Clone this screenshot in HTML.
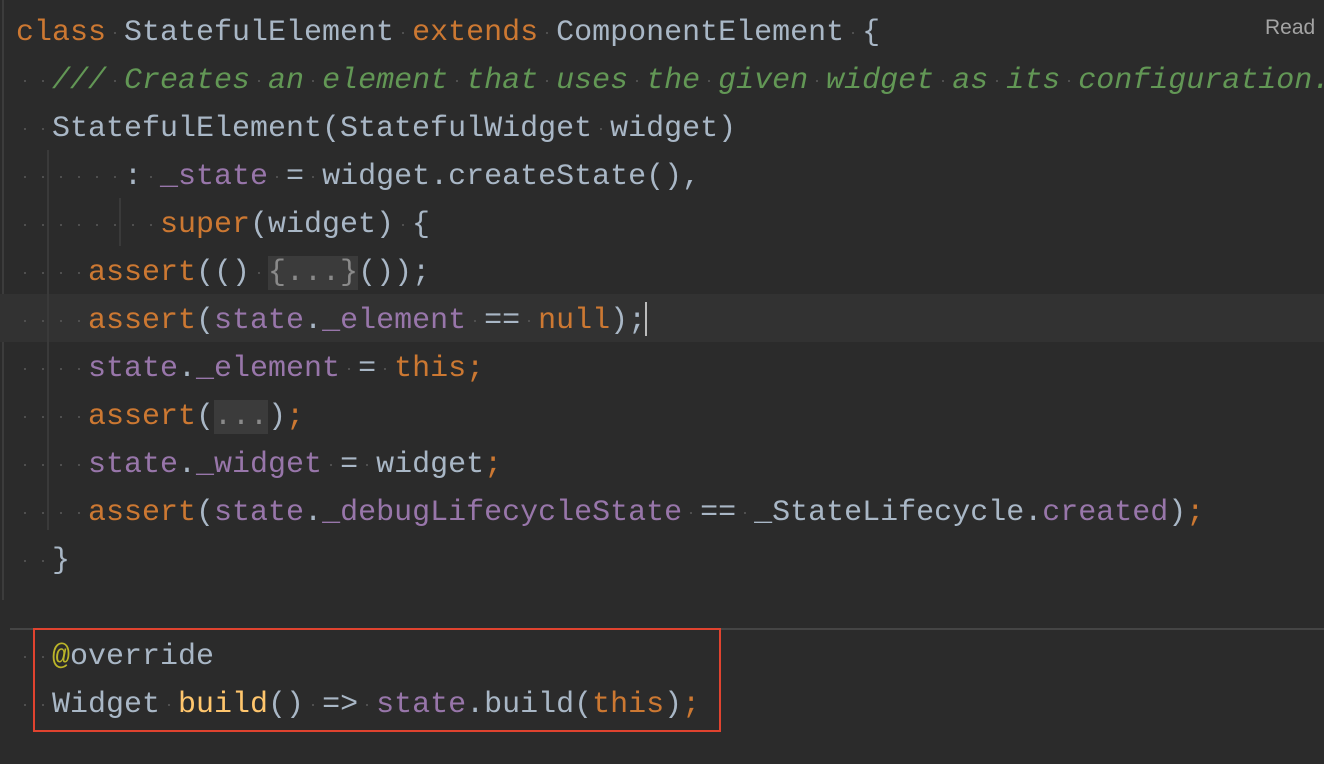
<!DOCTYPE html>
<html><head><meta charset="utf-8"><style>
html,body{margin:0;padding:0;background:#2b2b2b;width:1324px;height:764px;overflow:hidden;position:relative}
.code{position:absolute;left:16px;top:9px;font-family:"Liberation Mono",monospace;font-size:30px;line-height:48px;color:#a9b7c6;white-space:nowrap}
.l{height:48px;position:relative;z-index:2}
.k{color:#cc7832}.c{color:#629755;font-style:italic}.p{color:#9876aa}.y{color:#ffc66d}.a{color:#bbb529}
.f{background:#3b3b3b;color:#8a8a8a}
i{display:inline-block;width:18px;height:48px;vertical-align:top;position:relative}
i::after{content:"";position:absolute;left:8px;top:23px;width:2px;height:2px;background:#4f4f4f}
.cur{position:absolute;left:0;top:294px;width:1324px;height:48px;background:#323232;z-index:1}
.box{position:absolute;left:33px;top:628px;width:684px;height:100px;border:2px solid #e0432f;z-index:3}
.sep{position:absolute;left:10px;top:628px;width:1314px;height:2px;background:#454545;z-index:1}
.g{position:absolute;width:2px;background:#3a3a3a;z-index:2}
.read{position:absolute;left:1265px;top:16px;font-family:"Liberation Sans",sans-serif;font-size:21px;color:#a4a4a4;z-index:4}
.caret{position:absolute;left:645px;top:302px;width:2px;height:34px;background:#bbbbbb;z-index:3}
.gut{position:absolute;left:2px;top:0;width:2px;height:600px;background:#3c3c3c}
</style></head><body>
<div class="gut"></div>
<div class="cur"></div>
<div class="sep"></div>
<div class="g" style="left:47px;top:150px;height:380px"></div>
<div class="g" style="left:119px;top:198px;height:48px"></div>
<div class="read">Read</div>
<div class="code"><div class="l"><span class="k">class</span><i></i>StatefulElement<i></i><span class="k">extends</span><i></i>ComponentElement<i></i>{</div><div class="l"><i></i><i></i><span class="c">///<i></i>Creates<i></i>an<i></i>element<i></i>that<i></i>uses<i></i>the<i></i>given<i></i>widget<i></i>as<i></i>its<i></i>configuration.</span></div><div class="l"><i></i><i></i>StatefulElement(StatefulWidget<i></i>widget)</div><div class="l"><i></i><i></i><i></i><i></i><i></i><i></i>:<i></i><span class="p">_state</span><i></i>=<i></i>widget.createState(),</div><div class="l"><i></i><i></i><i></i><i></i><i></i><i></i><i></i><i></i><span class="k">super</span>(widget)<i></i>{</div><div class="l"><i></i><i></i><i></i><i></i><span class="k">assert</span>(()<i></i><span class="f">{...}</span>());</div><div class="l"><i></i><i></i><i></i><i></i><span class="k">assert</span>(<span class="p">state</span>.<span class="p">_element</span><i></i>==<i></i><span class="k">null</span>);</div><div class="l"><i></i><i></i><i></i><i></i><span class="p">state</span>.<span class="p">_element</span><i></i>=<i></i><span class="k">this;</span></div><div class="l"><i></i><i></i><i></i><i></i><span class="k">assert</span>(<span class="f">...</span>)<span class="k">;</span></div><div class="l"><i></i><i></i><i></i><i></i><span class="p">state</span>.<span class="p">_widget</span><i></i>=<i></i>widget<span class="k">;</span></div><div class="l"><i></i><i></i><i></i><i></i><span class="k">assert</span>(<span class="p">state</span>.<span class="p">_debugLifecycleState</span><i></i>==<i></i>_StateLifecycle.<span class="p">created</span>)<span class="k">;</span></div><div class="l"><i></i><i></i>}</div><div class="l"></div><div class="l"><i></i><i></i><span class="a">@</span>override</div><div class="l"><i></i><i></i>Widget<i></i><span class="y">build</span>()<i></i>=&gt;<i></i><span class="p">state</span>.build(<span class="k">this</span>)<span class="k">;</span></div></div>
<div class="caret"></div>
<div class="box"></div>
</body></html>
